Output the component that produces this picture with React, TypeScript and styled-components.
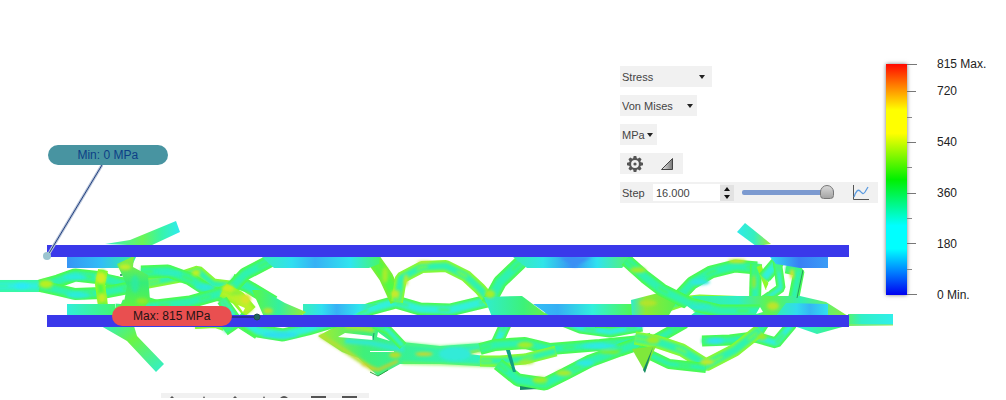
import React, { useState } from "react";
import styled, { createGlobalStyle } from "styled-components";

const GlobalStyle = createGlobalStyle`
  * { box-sizing: border-box; }
  body {
    margin: 0;
    background: #fff;
    font-family: "Liberation Sans", Arial, sans-serif;
    font-size: 11px;
    color: #444;
    overflow-x: hidden;
  }
  button, input, select { font: inherit; color: inherit; }
`;

const Page = styled.main`
  display: flex;
  flex-direction: column;
`;

const Viewport = styled.section`
  position: relative;
  display: grid;
  grid-template-columns: minmax(0, 1fr);
`;

const ModelView = styled.svg`
  grid-area: 1 / 1;
  display: block;
  width: 100%;
  height: auto;
`;

const Overlay = styled.div`
  grid-area: 1 / 1;
  position: relative;
  display: flex;
  justify-content: flex-end;
  align-items: flex-start;
  gap: 8px;
  padding-top: 56px;
`;

const Controls = styled.form`
  display: flex;
  flex-direction: column;
  align-items: flex-start;
  gap: 8px;
  width: 258px;
  padding-top: 10px;
`;

const ControlRow = styled.div`
  display: flex;
  align-items: center;
  height: 21px;
  background: #f1f1f1;
`;

const SelectBox = styled.div<{ $width: number }>`
  display: grid;
  align-items: center;
  width: ${(p) => p.$width}px;
  height: 21px;
  background: #f1f1f1;
`;

const Select = styled.select`
  grid-area: 1 / 1;
  appearance: none;
  width: 100%;
  height: 21px;
  padding: 0 2px;
  border: 0;
  background: transparent;
`;

const SelectArrow = styled.svg<{ $inset: number }>`
  grid-area: 1 / 1;
  justify-self: end;
  margin-right: ${(p) => p.$inset}px;
  pointer-events: none;
`;

const IconButton = styled.button`
  display: grid;
  place-items: center;
  width: 30px;
  height: 21px;
  padding: 0;
  border: 0;
  background: transparent;
`;

const IconRow = styled(ControlRow)`
  width: 63px;
  gap: 2px;
`;

const StepRow = styled(ControlRow)`
  width: 100%;
  padding-left: 2px;
`;

const StepLabel = styled.label`
  width: 31px;
`;

const StepInput = styled.input`
  width: 67px;
  height: 17px;
  padding: 0 3px;
  border: 0;
  background: #fff;
`;

const Spinner = styled.div`
  display: grid;
  grid-template-rows: 8px 8px;
  width: 14px;
  background: #e2e2e2;
`;

const SpinButton = styled.button`
  display: grid;
  place-items: center;
  padding: 0;
  border: 0;
  background: transparent;
`;

const Slider = styled.input`
  appearance: none;
  width: 92px;
  height: 15px;
  margin: 0 12px 0 8px;
  background: transparent;

  &::-webkit-slider-runnable-track {
    height: 5px;
    border-radius: 2px;
    background: #7c9ad0;
  }

  &::-webkit-slider-thumb {
    appearance: none;
    width: 14px;
    height: 14px;
    margin-top: -5px;
    border: 1px solid #777;
    border-radius: 8px 8px 4px 4px;
    background: linear-gradient(#d8d8d8, #a4a4a4);
  }
`;

const Legend = styled.aside`
  display: flex;
  align-items: flex-start;
  width: 120px;
  color: #222;
  font-size: 12px;
`;

const ScaleBar = styled.div`
  width: 21px;
  height: 231px;
  margin-top: 8px;
  background: linear-gradient(
    #ff0800 0%,
    #ff7a00 9%,
    #ffff00 20%,
    #ffff00 30%,
    #00f000 50%,
    #00ffff 70%,
    #00ffff 80%,
    #0080ff 90%,
    #0000f0 100%
  );
  box-shadow: 0 0 4px #777;
`;

const ScaleTicks = styled.svg`
  display: block;
  margin-top: 8px;
`;

const ScaleLabels = styled.ol`
  display: flex;
  flex-direction: column;
  gap: 35px;
  margin: 0 0 0 20px;
  padding: 0;
  list-style: none;
  line-height: 16px;
  white-space: nowrap;

  li:first-child { margin-bottom: -24px; }
`;

const Callout = styled.div<{ $x: number; $y: number; $tone: "min" | "max" }>`
  position: absolute;
  left: ${(p) => p.$x}%;
  top: ${(p) => p.$y}%;
  width: 120px;
  border-radius: 10px;
  background: ${(p) => (p.$tone === "min" ? "#4894a1" : "#e94f50")};
  color: ${(p) => (p.$tone === "min" ? "#0d3f86" : "#241414")};
  font-size: 12px;
  line-height: 20px;
  text-align: center;
`;

const BottomBar = styled.nav`
  display: flex;
  width: 208px;
  height: 5px;
  margin-left: 16%;
  overflow: hidden;
  background: #f1f1f1;
`;

type BeamShape = { pts: string; w?: number; edge?: string; core?: string };

const GREEN = "#4dfb48";
const LIME = "#8ffa28";
const TEAL = "#2ff3b0";
const CYAN = "#31f0dc";

/* Lattice struts behind the two plates. */
const beams: BeamShape[] = [
  { pts: "-4,286 48,286", w: 12, edge: "#38f9a0", core: CYAN },
  { pts: "40,286 58,281 75,275 102,278 130,286", w: 13 },
  { pts: "40,286 58,290 75,294 102,293 128,288", w: 12 },
  { pts: "103,270 100,284 103,306", w: 10, edge: LIME, core: GREEN },
  { pts: "146,301 168,308", w: 9, core: CYAN },
  { pts: "148,283 180,277 198,271 213,284 238,287", w: 11, edge: LIME },
  { pts: "141,272 168,271 190,279 210,292 226,297", w: 13 },
  { pts: "232,280 247,286 274,302", w: 13, core: TEAL },
  { pts: "116,306 148,307 190,302 215,295 238,288", w: 13 },
  { pts: "226,294 245,274 272,260", w: 13 },
  { pts: "223,290 238,298 250,312", w: 15, edge: LIME, core: "#baf12b" },
  { pts: "222,300 236,320 258,334", w: 11, core: CYAN },
  { pts: "195,326 215,325 224,328", w: 6, edge: LIME },
  { pts: "224,330 240,319", w: 13 },
  { pts: "238,318 258,331 283,335 308,329 345,318 370,309 396,302 420,309 450,310 475,304 496,299", w: 13, core: CYAN },
  { pts: "374,260 386,277 397,301", w: 14, edge: "#79ed34", core: GREEN },
  { pts: "397,302 401,278 422,267 446,266 466,276 480,289 492,303", w: 12, edge: LIME, core: TEAL },
  { pts: "374,324 388,330 403,346", w: 9, core: CYAN },
  { pts: "488,304 500,282 523,260", w: 14 },
  { pts: "507,321 495,347", w: 12, core: CYAN },
  { pts: "480,349 495,345 525,343 550,349 600,345 652,340", w: 12 },
  { pts: "480,361 500,361 525,359 556,351", w: 11, edge: LIME },
  { pts: "498,364 518,380 545,384 565,374 590,361 620,350 652,339", w: 13 },
  { pts: "545,314 580,328 610,332 642,326", w: 11, core: CYAN },
  { pts: "595,324 632,323 647,318", w: 8, core: TEAL },
  { pts: "642,315 680,302 700,300 750,302", w: 11, edge: LIME, core: TEAL },
  { pts: "674,302 692,283 711,272 735,266 757,268", w: 13 },
  { pts: "756,264 755,300", w: 12, core: TEAL },
  { pts: "759,266 768,289", w: 5, edge: LIME, core: TEAL },
  { pts: "781,258 764,278", w: 13, core: CYAN },
  { pts: "777,260 781,288 758,304", w: 9, core: CYAN },
  { pts: "786,268 799,271 793,302", w: 11, core: TEAL },
  { pts: "702,341 730,340 762,336", w: 11, core: TEAL },
  { pts: "766,320 755,337 776,343 792,324", w: 11, core: CYAN },
  { pts: "638,355 655,340 685,323", w: 11 },
  { pts: "635,338 658,342 682,350 706,365 735,350 760,330", w: 13, edge: LIME },
  { pts: "640,350 669,364 706,368", w: 10 },
];

/* The one strut that runs in front of the right-hand bundle. */
const frontBeams: BeamShape[] = [
  { pts: "626,260 645,277 662,290 690,304 720,311 760,311", w: 13 },
];

type Patch = { pts: string; fill: string };

const patches: Patch[] = [
  { pts: "105,244 130,240 176,221 180,232 150,246", fill: "url(#armTop)" },
  { pts: "67,257 136,257 131,268 67,268", fill: "url(#stripLeft)" },
  { pts: "117,264 134,256 133,267 148,275 150,300 142,310 112,310 124,302 127,286", fill: "url(#knot)" },
  { pts: "67,304 115,304 115,316 67,316", fill: "url(#stripLow)" },
  { pts: "101,326 134,326 137,336 164,364 156,372 127,341", fill: "url(#legLow)" },
  { pts: "262,257 380,257 379,264 369,268 274,268", fill: "url(#stripA)" },
  { pts: "303,304 378,304 350,316 303,316", fill: "url(#stripA)" },
  { pts: "252,290 262,290 285,303 306,312 300,317 264,317", fill: "url(#wedge)" },
  { pts: "513,257 633,257 622,268 527,268", fill: "url(#stripB)" },
  { pts: "533,304 632,304 632,316 550,316", fill: "url(#stripC)" },
  { pts: "484,297 522,296 550,317 492,317", fill: "url(#wedge2)" },
  { pts: "631,300 662,292 680,296 668,317 632,317", fill: "url(#wedge3)" },
  { pts: "737,232 745,223 771,244 756,246", fill: "url(#armRight)" },
  { pts: "770,257 828,257 828,268 800,268 776,264", fill: "url(#stripD)" },
  { pts: "692,296 752,296 800,296 826,302 848,316 690,316 700,308", fill: "url(#bundle)" },
  { pts: "786,303 828,304 828,316 776,316", fill: "url(#stripE)" },
  { pts: "848,314 893,314 893,325 848,326", fill: "url(#tail)" },
  { pts: "794,326 846,326 817,334", fill: "url(#stripLow)" },
  { pts: "632,349 656,346 645,372", fill: "#7fe83b" },
  { pts: "653,347 645,373 643,370", fill: "#168b67" },
  { pts: "506,350 510,350 516,372 513,372", fill: "#0f9f83" },
  { pts: "520,386 537,389 520,390", fill: "#168b67" },
];

/* Blurred spots of higher or lower stress: x, y, rx, ry, colour. */
const spots: [number, number, number, number, string][] = [
  [46, 284, 7, 4, "#b8ef20"], [101, 278, 5, 6, "#d2ee22"], [102, 298, 4, 5, "#c5ed25"],
  [22, 286, 8, 3, "#2ceaf6"], [75, 277, 12, 3, "#2cecdc"], [78, 295, 12, 3, "#2cecdc"],
  [125, 267, 6, 3, "#c2ed2a"], [142, 301, 6, 3, "#8fec2a"], [196, 273, 4, 3, "#bff022"],
  [228, 288, 6, 3, "#d5ea22"], [246, 299, 5, 5, "#d8e52a"], [385, 275, 3, 8, "#a7ed2c"],
  [395, 294, 4, 4, "#c8e92a"], [406, 280, 2, 6, "#bdea2f"], [424, 262, 7, 1, "#c8e52f"],
  [490, 294, 5, 4, "#a7ee2a"], [268, 311, 5, 3, "#bce42b"],
  [395, 355, 6, 3, "#b5df2b"], [424, 354, 9, 2, "#c7d832"], [525, 345, 8, 3, "#a6ed2c"],
  [540, 380, 8, 3, "#9cee2c"], [564, 373, 8, 3, "#a7eb2e"], [526, 362, 8, 2, "#a9ea2e"],
  [648, 303, 9, 3, "#b3e42b"], [638, 270, 8, 3, "#a2ed2b"], [737, 261, 9, 2, "#c7e529"],
  [754, 282, 2, 7, "#99ea2b"], [773, 306, 6, 4, "#bbe52b"], [762, 337, 5, 3, "#99ec2c"],
  [707, 362, 7, 3, "#c2e82a"], [653, 340, 7, 4, "#9ced2b"], [792, 274, 2, 5, "#d4e22e"],
  [600, 346, 18, 3, "#2fe9e4"], [585, 363, 9, 3, "#2fe9e4"], [610, 352, 10, 2, "#7bef38"],
  [455, 354, 16, 7, "#30ebd8"], [280, 335, 18, 3, "#2fdff0"], [700, 282, 10, 3, "#2fe8e0"],
  [236, 293, 5, 2, "#8af03a"], [205, 287, 10, 3, "#2de9d6"], [170, 273, 12, 2, "#2feec2"],
  [715, 341, 9, 3, "#31e2ec"], [700, 307, 12, 3, "#2eeace"], [135, 284, 4, 9, "#2feb9c"],
];

function Beam({ pts, w = 10, edge = GREEN, core = TEAL }: BeamShape) {
  return (
    <g fill="none" strokeLinejoin="bevel">
      <polyline points={pts} stroke={edge} strokeWidth={w} />
      <polyline points={pts} stroke={core} strokeWidth={w - 5} filter="url(#soft)" />
      <polyline points={pts} stroke={edge} strokeWidth="2" strokeDasharray="12 30" filter="url(#soft)" />
    </g>
  );
}

function StressModel() {
  return (
    <ModelView viewBox="0 0 1006 393" role="img" aria-label="Von Mises stress result">
      <defs>
        <filter id="soft" filterUnits="userSpaceOnUse" x="-10" y="200" width="1026" height="193">
          <feGaussianBlur stdDeviation="1.6" />
        </filter>
        <linearGradient id="armTop"><stop stopColor="#3ceeca" /><stop offset=".5" stopColor="#69f657" /><stop offset=".75" stopColor="#37f5a8" /><stop offset="1" stopColor="#30eaf0" /></linearGradient>
        <linearGradient id="stripLeft"><stop stopColor="#3695f5" /><stop offset=".5" stopColor="#31bef6" /><stop offset="1" stopColor="#35f29b" /></linearGradient>
        <linearGradient id="stripLow"><stop stopColor="#30eeda" /><stop offset="1" stopColor="#41f772" /></linearGradient>
        <linearGradient id="knot" x2="0" y2="1"><stop stopColor="#91ef35" /><stop offset=".5" stopColor="#35ed79" /><stop offset="1" stopColor="#64f43c" /></linearGradient>
        <linearGradient id="legLow" y2="1"><stop stopColor="#30eec6" /><stop offset=".4" stopColor="#6bf445" /><stop offset="1" stopColor="#30efcf" /></linearGradient>
        <linearGradient id="stripA"><stop stopColor="#38efb9" /><stop offset=".25" stopColor="#30dff0" /><stop offset=".45" stopColor="#38b0f5" /><stop offset=".75" stopColor="#30e5ee" /><stop offset="1" stopColor="#45f769" /></linearGradient>
        <linearGradient id="stripB"><stop stopColor="#35efb0" /><stop offset=".25" stopColor="#31e5e8" /><stop offset=".5" stopColor="#3a8ff4" /><stop offset=".7" stopColor="#30e2f0" /><stop offset="1" stopColor="#5af65e" /></linearGradient>
        <linearGradient id="stripC"><stop stopColor="#31bff5" /><stop offset=".25" stopColor="#36aff4" /><stop offset=".6" stopColor="#31efdd" /><stop offset="1" stopColor="#50f754" /></linearGradient>
        <linearGradient id="stripD"><stop stopColor="#31dbf2" /><stop offset=".5" stopColor="#397ff5" /><stop offset="1" stopColor="#3a9cf6" /></linearGradient>
        <linearGradient id="stripE"><stop stopColor="#31efb4" /><stop offset=".4" stopColor="#31dbee" /><stop offset=".65" stopColor="#36b6f4" /><stop offset="1" stopColor="#31e0ee" /></linearGradient>
        <linearGradient id="bundle"><stop stopColor="#35f3a0" /><stop offset=".3" stopColor="#30efc4" /><stop offset=".5" stopColor="#62f34d" /><stop offset=".7" stopColor="#32f0b0" /><stop offset="1" stopColor="#8cf03a" /></linearGradient>
        <linearGradient id="wedge"><stop stopColor="#5cf743" /><stop offset=".5" stopColor="#33f0a0" /><stop offset="1" stopColor="#a2ec2e" /></linearGradient>
        <linearGradient id="wedge2"><stop stopColor="#31edcf" /><stop offset=".6" stopColor="#3cf279" /><stop offset="1" stopColor="#71ef40" /></linearGradient>
        <linearGradient id="wedge3"><stop stopColor="#30eccc" /><stop offset=".3" stopColor="#8fe934" /><stop offset="1" stopColor="#50f355" /></linearGradient>
        <linearGradient id="armRight"><stop stopColor="#30eae8" /><stop offset=".5" stopColor="#35efc0" /><stop offset="1" stopColor="#a6ed32" /></linearGradient>
        <linearGradient id="tail"><stop stopColor="#55f36f" /><stop offset=".3" stopColor="#30f0c8" /><stop offset="1" stopColor="#30efea" /></linearGradient>
        <linearGradient id="fan"><stop stopColor="#a5ed2f" /><stop offset=".25" stopColor="#3ff07a" /><stop offset=".6" stopColor="#33f2a4" /><stop offset="1" stopColor="#30efc8" /></linearGradient>
      </defs>

      <polygon points="318,336 340,324 376,324 402,342 440,346 482,343 502,346 470,354 500,358 496,367 440,364 400,364 378,376 358,358 342,352" fill="url(#fan)" />
      <g filter="url(#soft)" fill="none">
        <path d="M320 335 L344 350 L374 370" stroke="#b2e035" strokeWidth="4" />
        <path d="M345 326 L374 330" stroke="#a5e93a" strokeWidth="5" />
        <path d="M345 341 L370 343 L404 350" stroke="#31eacb" strokeWidth="5" />
        <path d="M362 364 L378 370 L398 361" stroke="#d0cf28" strokeWidth="3" />
        <path d="M402 363 L440 364 L496 366" stroke="#7df63a" strokeWidth="2" />
        <path d="M402 343 L440 347 L482 344" stroke="#5cf96a" strokeWidth="2" />
        <path d="M468 353 L502 347" stroke="#9fe93a" strokeWidth="3" />
      </g>
      <path d="M338 337 L345 333 L372 336 L373 340Z M378 332 L390 341 L377 337Z M370 351 L394 351 L394 352 L370 352Z" fill="#fff" />
      <path d="M374 333 L373 340" stroke="#259c70" strokeWidth="1" />
      <path d="M370 372 L378 376 L388 370" fill="none" stroke="#329f3f" strokeWidth="1" />

      {beams.map((b) => <Beam key={b.pts} {...b} />)}
      {patches.map((p) => <polygon key={p.pts} points={p.pts} fill={p.fill} />)}
      {frontBeams.map((b) => <Beam key={b.pts} {...b} />)}
      <g filter="url(#soft)">
        {spots.map(([x, y, rx, ry, fill]) => (
          <ellipse key={`${x}-${y}`} cx={x} cy={y} rx={rx} ry={ry} fill={fill} />
        ))}
      </g>
      <path d="M575 257 L592 257 L575 267 L559 257Z" fill="#3a8ff4" filter="url(#soft)" />
      <path d="M803 270 L797 298" stroke="#269a62" strokeWidth="1" />
      <path d="M848 325 H893" stroke="#a4e94b" strokeWidth="1" />
      <path d="M109 271 L117 270 L122 277 L108 274Z M108 298 L123 299 L121 304 L108 303Z M766 289 L770 280 L773 286 L768 292Z M238 305 L245 308 L243 312Z M678 314 L687 306 L694 311 L688 314Z M756 314 L760 307 L763 312Z" fill="#fff" />
      <circle cx="121" cy="275" r="1" fill="#1c7c52" />

      <rect x="47" y="245" width="802" height="12" fill="#3a38ea" />
      <rect x="47" y="315" width="802" height="12" fill="#3a38ea" />

      <path d="M102 165 L48 255" stroke="#b9c5da" strokeWidth="3" />
      <path d="M102 165 L48 255" stroke="#24427f" strokeWidth="1" />
      <circle cx="47" cy="256" r="4" fill="#9cc5d0" />
      <path d="M231 317 H254" stroke="#17264f" strokeWidth="1" />
      <circle cx="257" cy="317" r="3" fill="#1d665e" stroke="#23504a" />
    </ModelView>
  );
}

function Dropdown({ label, value, options, width, inset }: { label: string; value: string; options: string[]; width: number; inset: number }) {
  return (
    <SelectBox $width={width}>
      <Select aria-label={label} defaultValue={value}>
        {options.map((o) => <option key={o}>{o}</option>)}
      </Select>
      <SelectArrow $inset={inset} width="6" height="4" aria-hidden="true">
        <path d="M0 0H6L3 4Z" fill="#222" />
      </SelectArrow>
    </SelectBox>
  );
}

function GearIcon() {
  return (
    <svg width="18" height="18" viewBox="-9 -9 18 18" aria-hidden="true">
      <g fill="#555">
        {[0, 45, 90, 135, 180, 225, 270, 315].map((a) => (
          <path key={a} d="M-2 -5L-1.3 -8H1.3L2 -5Z" transform={`rotate(${a})`} />
        ))}
        <circle r="1.6" />
      </g>
      <circle r="4.9" fill="none" stroke="#555" strokeWidth="2" />
    </svg>
  );
}

function ShadeIcon() {
  return (
    <svg width="14" height="14" aria-hidden="true">
      <defs>
        <linearGradient id="shade"><stop stopColor="#eee" /><stop offset="1" stopColor="#777" /></linearGradient>
      </defs>
      <path d="M1.5 12.5L12.5 1.5V12.5Z" fill="url(#shade)" stroke="#444" />
    </svg>
  );
}

function PlotIcon() {
  return (
    <svg width="18" height="17" fill="none" aria-hidden="true">
      <path d="M1.5 1V15.5H17" stroke="#555" />
      <path d="M2 13C4 7 6 5 8 7S11 11 13 8L16 3" stroke="#5b9be0" strokeWidth="1.3" />
    </svg>
  );
}

const labels = ["815 Max.", "720", "540", "360", "180", "0 Min."];

export default function App() {
  const [step, setStep] = useState(16);
  const clamp = (n: number) => Math.min(16, Math.max(0, n));
  return (
    <>
      <GlobalStyle />
      <Page>
        <Viewport>
          <StressModel />
          <Callout $x={4.75} $y={36.9} $tone="min">Min: 0 MPa</Callout>
          <Callout $x={11.1} $y={77.9} $tone="max">Max: 815 MPa</Callout>
          <Overlay>
            <Controls>
              <Dropdown label="Result" value="Stress" options={["Stress", "Displacement", "Strain"]} width={92} inset={7} />
              <Dropdown label="Component" value="Von Mises" options={["Von Mises", "1st Principal"]} width={77} inset={4} />
              <Dropdown label="Unit" value="MPa" options={["MPa", "psi"]} width={37} inset={4} />
              <IconRow>
                <IconButton type="button" aria-label="Legend options"><GearIcon /></IconButton>
                <IconButton type="button" aria-label="Shading"><ShadeIcon /></IconButton>
              </IconRow>
              <StepRow>
                <StepLabel htmlFor="step">Step</StepLabel>
                <StepInput id="step" value={step.toFixed(3)} onChange={(e) => setStep(clamp(Number(e.target.value) || 0))} />
                <Spinner>
                  <SpinButton type="button" aria-label="Next step" onClick={() => setStep(clamp(step + 1))}>
                    <svg width="6" height="4"><path d="M0 4L3 0L6 4Z" fill="#111" /></svg>
                  </SpinButton>
                  <SpinButton type="button" aria-label="Previous step" onClick={() => setStep(clamp(step - 1))}>
                    <svg width="6" height="4"><path d="M0 0L3 4L6 0Z" fill="#111" /></svg>
                  </SpinButton>
                </Spinner>
                <Slider type="range" aria-label="Step position" min={0} max={16} value={step} onChange={(e) => setStep(Number(e.target.value))} />
                <IconButton type="button" aria-label="Plot"><PlotIcon /></IconButton>
              </StepRow>
            </Controls>
            <Legend aria-label="Stress scale in MPa">
              <ScaleBar />
              <ScaleTicks width="10" height="231" aria-hidden="true">
                <path d="M0 .5H10M0 27.5H9M0 78.5H9M0 129.5H9M0 179.5H9M0 230.5H10" stroke="#777" />
                <path d="M0 53.5H5M0 103.5H5M0 154.5H5M0 205.5H5" stroke="#888" />
              </ScaleTicks>
              <ScaleLabels>
                {labels.map((l) => <li key={l}>{l}</li>)}
              </ScaleLabels>
            </Legend>
          </Overlay>
        </Viewport>
        <BottomBar aria-label="Navigation">
          <svg width="208" height="5" aria-hidden="true">
            <path d="M9 5L11 3L13 5Z M42 5L43 3L44 5Z M72 5L74 3L76 5Z M102 5L103 3L104 5Z M119 5Q123 1 127 5Z M150 3H165V5H150Z M181 3H196V5H181Z" fill="#555" />
          </svg>
        </BottomBar>
      </Page>
    </>
  );
}
